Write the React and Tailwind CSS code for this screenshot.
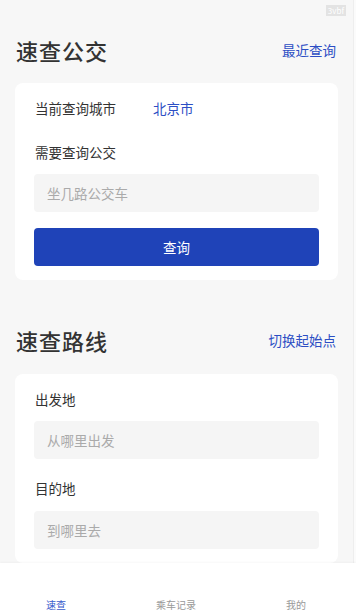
import React from 'react';

const font = { fontFamily: '"Noto Sans CJK SC", "Noto Sans", sans-serif' };

function SectionHeader({ title, action }) {
    return (
        <div className="flex items-center justify-between pl-[16px] pr-[17px] h-[30px]">
            <h2 className="text-[22px] leading-[30px] font-medium text-[#333] tracking-[1px]">{title}</h2>
            <span className="text-[13.5px] text-[#2c4ec4]">{action}</span>
        </div>
    );
}

function Field({ placeholder }) {
    return (
        <div className="h-[38px] bg-[#f5f5f5] rounded-[4px] flex items-center px-[13px] text-[13.5px] text-[#aaa]">
            {placeholder}
        </div>
    );
}

export default function App() {
    return (
        <div className="relative w-full h-[614px] flex flex-col bg-[#f7f7f7] overflow-hidden" style={font}>
            {/* watermark badge */}
            <div className="absolute top-[5px] right-[10px] bg-[#e3e3e3] text-white text-[8px] leading-[11px] px-[2px]">3vbf</div>

            <div className="flex-1 flex overflow-hidden">
                <div className="flex-1 pt-[35px]">
                    <SectionHeader title="速查公交" action="最近查询" />

                    <div className="mx-[15px] mt-[18px] bg-white rounded-[8px] px-[19px] pt-[14px] pb-[14px]">
                        <div className="flex items-center h-[22px] text-[13.5px] text-[#333]">
                            <span className="pl-[1px] w-[119px]">当前查询城市</span>
                            <span className="text-[#2c4ec4]">北京市</span>
                        </div>
                        <div className="mt-[22px] h-[22px] pl-[1px] text-[13.5px] leading-[22px] text-[#333]">需要查询公交</div>
                        <div className="mt-[11px]">
                            <Field placeholder="坐几路公交车" />
                        </div>
                        <button className="mt-[16px] w-full h-[38px] rounded-[4px] bg-[#1f43b8] text-white text-[13.5px]">
                            查询
                        </button>
                    </div>

                    <div className="mt-[45px]">
                        <SectionHeader title="速查路线" action="切换起始点" />
                    </div>

                    <div className="mx-[15px] mt-[19px] bg-white rounded-[8px] px-[19px] pt-[14px] pb-[14px]">
                        <div className="h-[22px] pl-[1px] text-[13.5px] leading-[22px] text-[#333]">出发地</div>
                        <div className="mt-[11px]">
                            <Field placeholder="从哪里出发" />
                        </div>
                        <div className="mt-[18px] h-[22px] pl-[1px] text-[13.5px] leading-[22px] text-[#333]">目的地</div>
                        <div className="mt-[12px]">
                            <Field placeholder="到哪里去" />
                        </div>
                    </div>
                </div>
                {/* scrollbar track */}
                <div className="w-[3px] bg-[#fbfbfb] border-l border-[#eeeeee]" />
            </div>

            <nav className="h-[51px] bg-white shadow-[0_-1px_2px_rgba(0,0,0,0.03)]">
                <div className="w-[360px] -ml-[4px] h-full grid grid-cols-3 items-end pb-[2px]">
                    <span className="text-center text-[10px] leading-[14px] text-[#3a5ccc]">速查</span>
                    <span className="text-center text-[10px] leading-[14px] text-[#999]">乘车记录</span>
                    <span className="text-center text-[10px] leading-[14px] text-[#999]">我的</span>
                </div>
            </nav>
        </div>
    );
}
